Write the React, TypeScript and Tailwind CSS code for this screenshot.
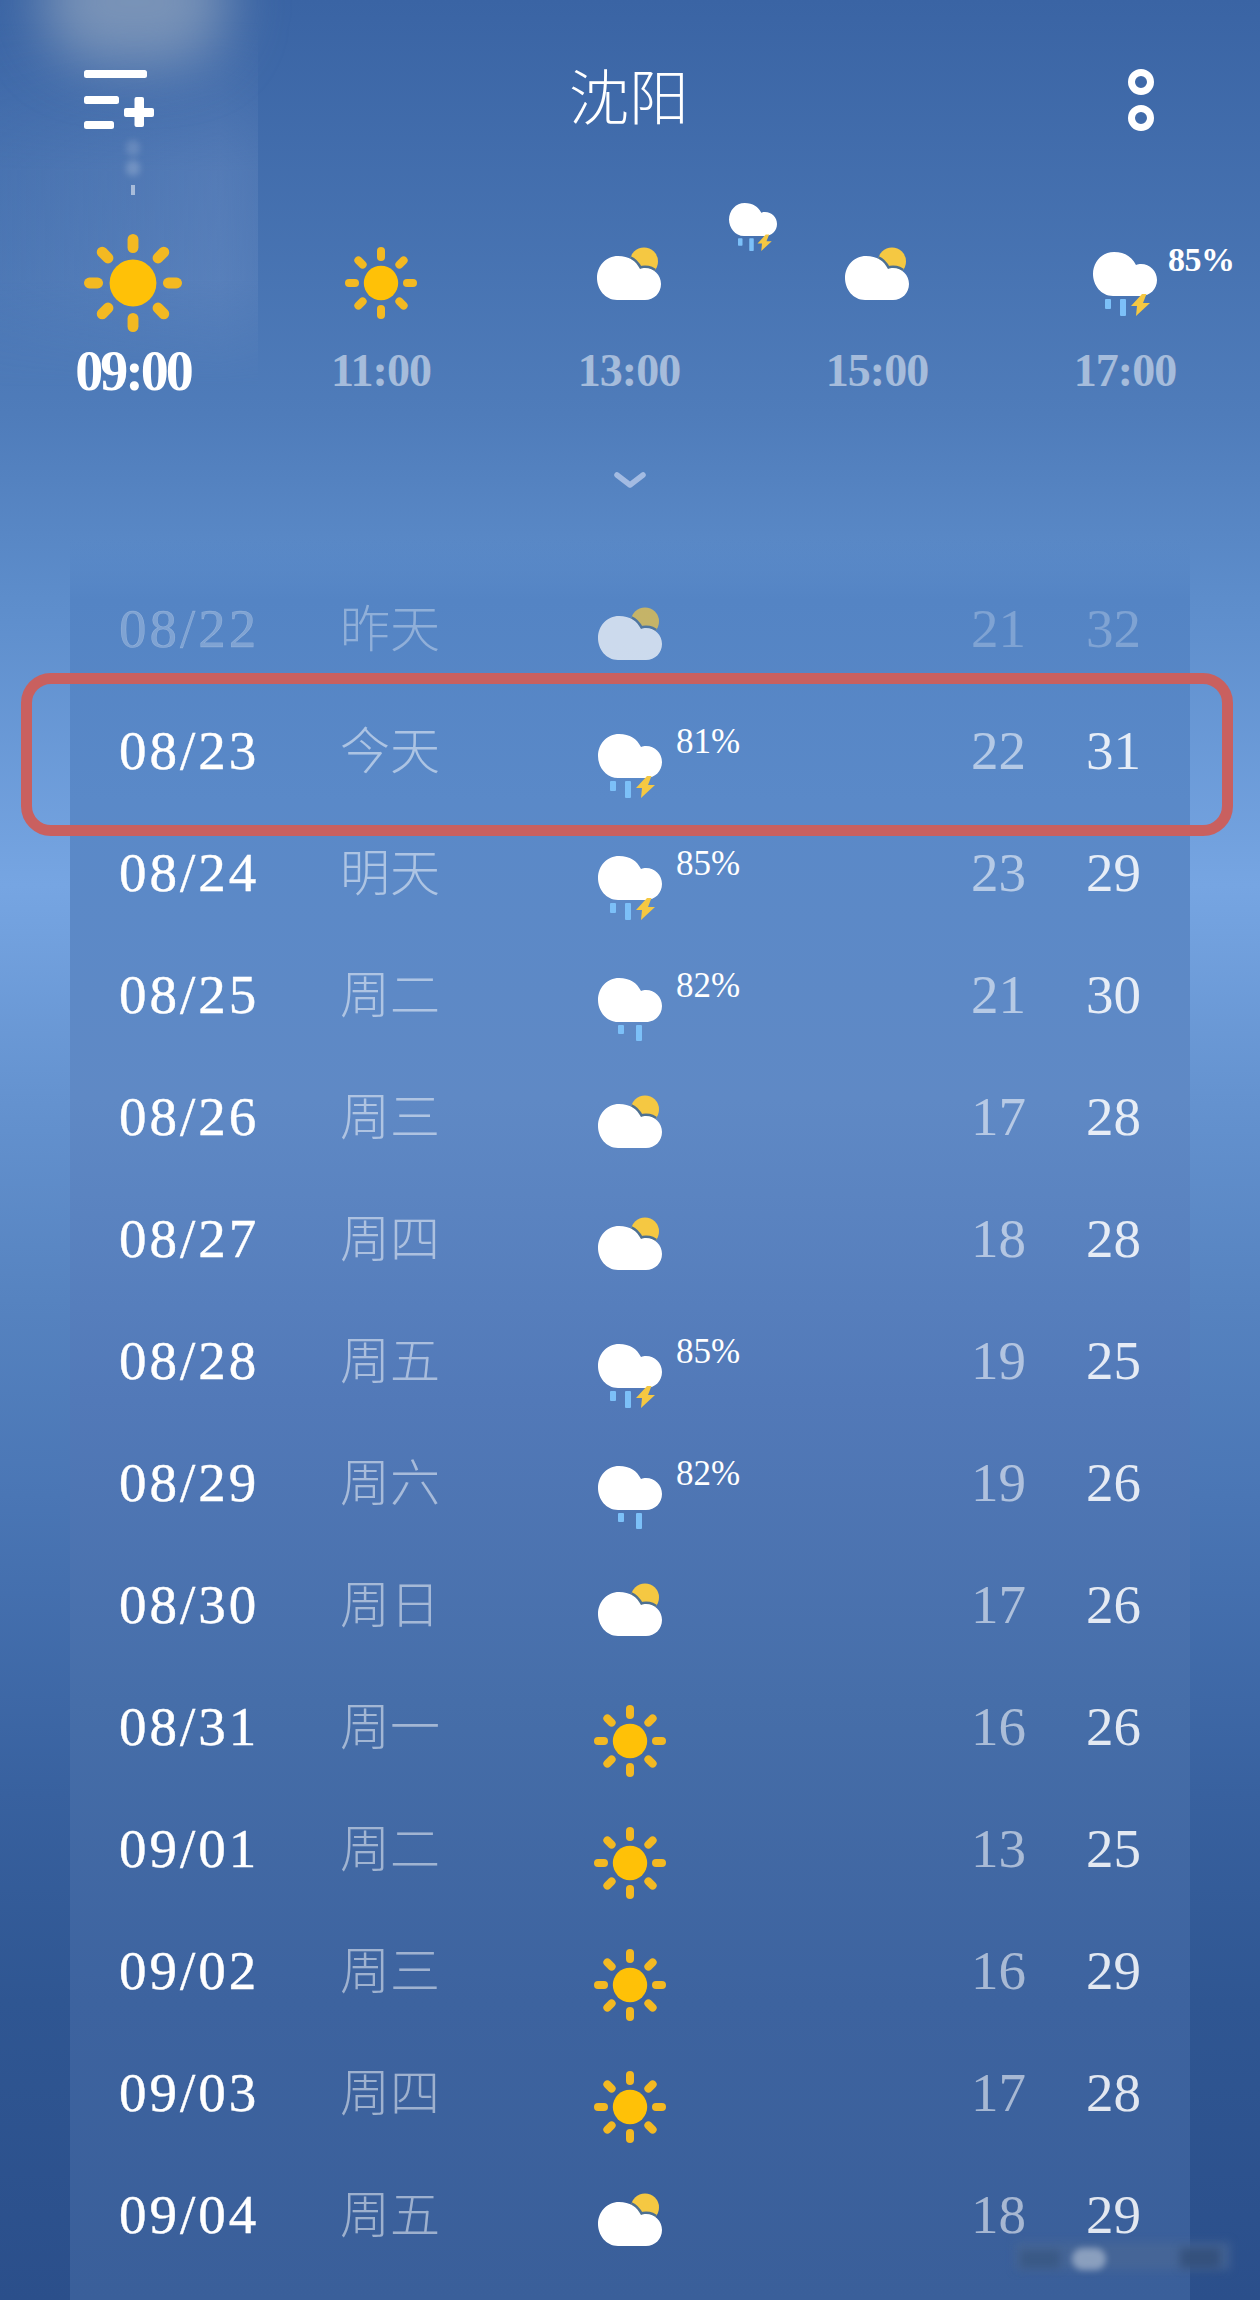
const SERIF = 'font-["Liberation_Serif","Noto_Sans_CJK_SC",serif]';

const CLOUD = 'M20 44C8 44 0 33 0 22 0 10 9 0 21 0c11 0 18 5 22 13 2-1 3-1 5-1 9 0 16 7 16 16s-7 16-16 16H20Z';

function SunIcon({ size = 72 }: { size?: number }) {
    const rays = [0, 45, 90, 135, 180, 225, 270, 315];
    return (
        <svg width={size} height={size} viewBox="0 0 72 72">
            {rays.map((r) => (
                <rect key={r} x="32" y="0" width="8" height="14" rx="4" fill="#f3b922" transform={`rotate(${r} 36 36)`} />
            ))}
            <circle cx="36" cy="36" r="17.2" fill="#ffc107" />
        </svg>
    );
}

function CloudSunIcon({ dim = false }: { dim?: boolean }) {
    return (
        <svg width="64" height="53" viewBox="0 -9 64 53" className={dim ? 'opacity-70' : ''}>
            <clipPath id="sun-clip">
                <circle cx="47" cy="5.5" r="14" />
            </clipPath>
            <circle cx="47" cy="5.5" r="14" fill="#f5c842" />
            <path d={CLOUD} fill="none" stroke="#4d7092" strokeWidth="5" clipPath="url(#sun-clip)" />
            <path d={CLOUD} fill="#fff" />
        </svg>
    );
}

function RainCloudIcon({ bolt = true, width = 64 }: { bolt?: boolean; width?: number }) {
    return (
        <svg width={width} height={width} viewBox="0 0 64 64">
            <path d={CLOUD} fill="#fff" />
            {bolt ? (
                <>
                    <rect x="12" y="47" width="6" height="10" rx="1" fill="#7cc0f8" />
                    <rect x="27" y="47" width="6" height="17" rx="1" fill="#7cc0f8" />
                    <path d="M49 42 38 54h6l-1 10 14-13h-7l3.500-9H49Z" fill="#f5c842" />
                </>
            ) : (
                <>
                    <rect x="20" y="47" width="6" height="9" rx="1" fill="#7cc0f8" />
                    <rect x="38" y="47" width="6" height="16" rx="1" fill="#7cc0f8" />
                </>
            )}
        </svg>
    );
}

function MenuPlusIcon() {
    return (
        <svg width="70" height="59" viewBox="0 0 70 59" fill="#fff">
            <rect x="0" y="0" width="63" height="8" rx="2.5" />
            <rect x="0" y="26" width="35" height="8" rx="2.5" />
            <rect x="0" y="51" width="30" height="8" rx="2.5" />
            <rect x="40" y="38" width="30" height="9" rx="2" />
            <rect x="50.500" y="27" width="9.500" height="30" rx="2" />
        </svg>
    );
}

const hours = [
    { t: '09:00', icon: 'bigsun' },
    { t: '11:00', icon: 'sun' },
    { t: '13:00', icon: 'cloud' },
    { t: '15:00', icon: 'cloud' },
    { t: '17:00', icon: 'rain', pct: '85%' },
];

const days = [
    { d: '08/22', w: '昨天', icon: 'cloud', lo: 21, hi: 32, past: true },
    { d: '08/23', w: '今天', icon: 'storm', pct: '81%', lo: 22, hi: 31 },
    { d: '08/24', w: '明天', icon: 'storm', pct: '85%', lo: 23, hi: 29 },
    { d: '08/25', w: '周二', icon: 'rain', pct: '82%', lo: 21, hi: 30 },
    { d: '08/26', w: '周三', icon: 'cloud', lo: 17, hi: 28 },
    { d: '08/27', w: '周四', icon: 'cloud', lo: 18, hi: 28 },
    { d: '08/28', w: '周五', icon: 'storm', pct: '85%', lo: 19, hi: 25 },
    { d: '08/29', w: '周六', icon: 'rain', pct: '82%', lo: 19, hi: 26 },
    { d: '08/30', w: '周日', icon: 'cloud', lo: 17, hi: 26 },
    { d: '08/31', w: '周一', icon: 'sun', lo: 16, hi: 26 },
    { d: '09/01', w: '周二', icon: 'sun', lo: 13, hi: 25 },
    { d: '09/02', w: '周三', icon: 'sun', lo: 16, hi: 29 },
    { d: '09/03', w: '周四', icon: 'sun', lo: 17, hi: 28 },
    { d: '09/04', w: '周五', icon: 'cloud', lo: 18, hi: 29 },
];

function DayIcon({ icon, past }: { icon: string; past?: boolean }) {
    if (icon === 'sun') return <div className="mt-[28px] -ml-[4px]"><SunIcon /></div>;
    if (icon === 'cloud') return <div className="mt-[9px]"><CloudSunIcon dim={past} /></div>;
    return <div className="mt-[30px]"><RainCloudIcon bolt={icon === 'storm'} /></div>;
}

export default function App() {
    return (
        <div
            className={`relative w-[1260px] h-[2300px] overflow-hidden text-white ${SERIF} bg-[linear-gradient(180deg,#3a64a4_0%,#4f7cba_18%,#5d8dcb_26%,#76a5e2_38.5%,#6492cf_48%,#5683c0_56.5%,#4a76b5_65%,#38619f_78%,#2f5692_87%,#2b4f8b_100%)]`}
        >
            {/* blurred glow behind the menu button */}
            <div className="absolute left-0 top-0 w-[258px] h-[430px] bg-[linear-gradient(90deg,rgba(120,155,205,0.12)_0%,rgba(125,155,205,0.3)_85%,rgba(125,155,205,0.22)_100%)] [mask-image:linear-gradient(180deg,transparent_5%,#000_40%,#000_65%,transparent_90%)]" />
            <div className="absolute left-[40px] top-[-60px] w-[190px] h-[125px] rounded-full bg-[#a3b2c4]/60 blur-[28px]" />
            <div className="absolute left-[126px] top-[140px] w-[14px] h-[16px] rounded-full bg-white/15 blur-[3px]" />
            <div className="absolute left-[126px] top-[160px] w-[14px] h-[16px] rounded-full bg-white/20 blur-[3px]" />
            <div className="absolute left-[131px] top-[185px] w-[4px] h-[10px] bg-white/50" />

            <div className="relative">
                <div className="grid grid-cols-[1fr_auto_1fr] items-start h-[150px] pt-[70px] pl-[84px] pr-[106px]">
                    <MenuPlusIcon />
                    <span className="text-[60px] leading-[62px] font-light -mt-[1px] ml-[20px]">沈阳</span>
                    <div className="flex flex-col gap-[10px] -mt-[1px] justify-self-end">
                        <div className="w-[26px] h-[26px] rounded-full border-[7px] border-white" />
                        <div className="w-[26px] h-[26px] rounded-full border-[7px] border-white" />
                    </div>
                </div>

                <div className="relative grid grid-cols-[248px_248px_248px_248px_248px] pl-[9px] h-[250px] pt-[83px]">
                    {hours.map((h) => (
                        <div key={h.t} className="relative flex flex-col items-center">
                            <div className="h-[100px] flex items-center justify-center">
                                {h.icon === 'bigsun' && <SunIcon size={98} />}
                                {h.icon === 'sun' && <SunIcon size={72} />}
                                {h.icon === 'cloud' && <div className="mb-[19px]"><CloudSunIcon /></div>}
                                {h.icon === 'rain' && <div className="mt-[2px]"><RainCloudIcon /></div>}
                            </div>
                            <span className={h.icon === 'bigsun' ? 'text-[56px] leading-[56px] font-bold tracking-[-3px] mt-[10px]' : 'text-[46px] leading-[56px] font-bold text-white/50 tracking-[-1px] mt-[10px]'}>
                                {h.t}
                            </span>
                            {h.pct && <span className="absolute left-[167px] top-[7px] text-[34px] leading-[40px] font-bold tracking-[-0.5px]">{h.pct}</span>}
                        </div>
                    ))}
                    {/* small icon floating above the row, as in the reference */}
                    <div className="absolute left-[729px] top-[53px]">
                        <RainCloudIcon width={48} />
                    </div>
                </div>

                <div className="flex justify-center h-[140px] pt-[71px]">
                    <svg width="34" height="18" viewBox="0 0 34 18" fill="none" stroke="#a3bbe2" strokeWidth="5.500" strokeLinecap="round" strokeLinejoin="round">
                        <polyline points="4,4 17,14 30,4" />
                    </svg>
                </div>

                <div className="ml-[70px] w-[1120px] h-[1760px] pt-[28px] bg-[linear-gradient(180deg,rgba(84,132,196,0)_0%,#5484c4_3.400%,#5a89c8_14.800%,#5f89c5_31.800%,#5279b8_48.900%,#466ea9_66%,#3d639f_83%,#3a5f9a_100%)]">
                    {days.map((row) => (
                        <div key={row.d} className="flex items-center h-[122px]">
                            <span className={`w-[270px] pl-[49px] text-[55px] tracking-[3px] [-webkit-text-stroke:0.4px_currentColor] ${row.past ? 'text-white/25' : ''}`}>{row.d}</span>
                            <span className={`w-[258px] mt-[3px] text-[50px] font-light ${row.past ? 'text-white/35' : 'text-white/50'}`}>{row.w}</span>
                            <div className="relative w-[373px] h-[122px] flex items-center">
                                <DayIcon icon={row.icon} past={row.past} />
                                {row.pct && <span className="absolute left-[78px] top-[32px] text-[35px] leading-[40px]">{row.pct}</span>}
                            </div>
                            <span className={`w-[115px] text-[55px] ${row.past ? 'text-white/25' : 'text-white/55'}`}>{row.lo}</span>
                            <span className={`text-[55px] ${row.past ? 'text-white/25' : 'text-white/85'}`}>{row.hi}</span>
                        </div>
                    ))}
                </div>
            </div>

            {/* red annotation drawn over the 08/23 row */}
            <div className="absolute left-[21px] top-[673px] w-[1212px] h-[163px] rounded-[30px] border-[11px] border-[#c9605f]" />

            {/* smudged-out watermark */}
            <div className="absolute left-[1015px] top-[2242px] w-[215px] h-[28px] bg-[#4a6896]/70 blur-[4px]" />
            <div className="absolute left-[1020px] top-[2250px] w-[40px] h-[18px] bg-[#35547f]/70 blur-[4px]" />
            <div className="absolute left-[1072px] top-[2248px] w-[34px] h-[22px] rounded-full bg-[#b9c6d8]/60 blur-[3px]" />
            <div className="absolute left-[1180px] top-[2248px] w-[40px] h-[20px] bg-[#2f4a73]/70 blur-[4px]" />
        </div>
    );
}
